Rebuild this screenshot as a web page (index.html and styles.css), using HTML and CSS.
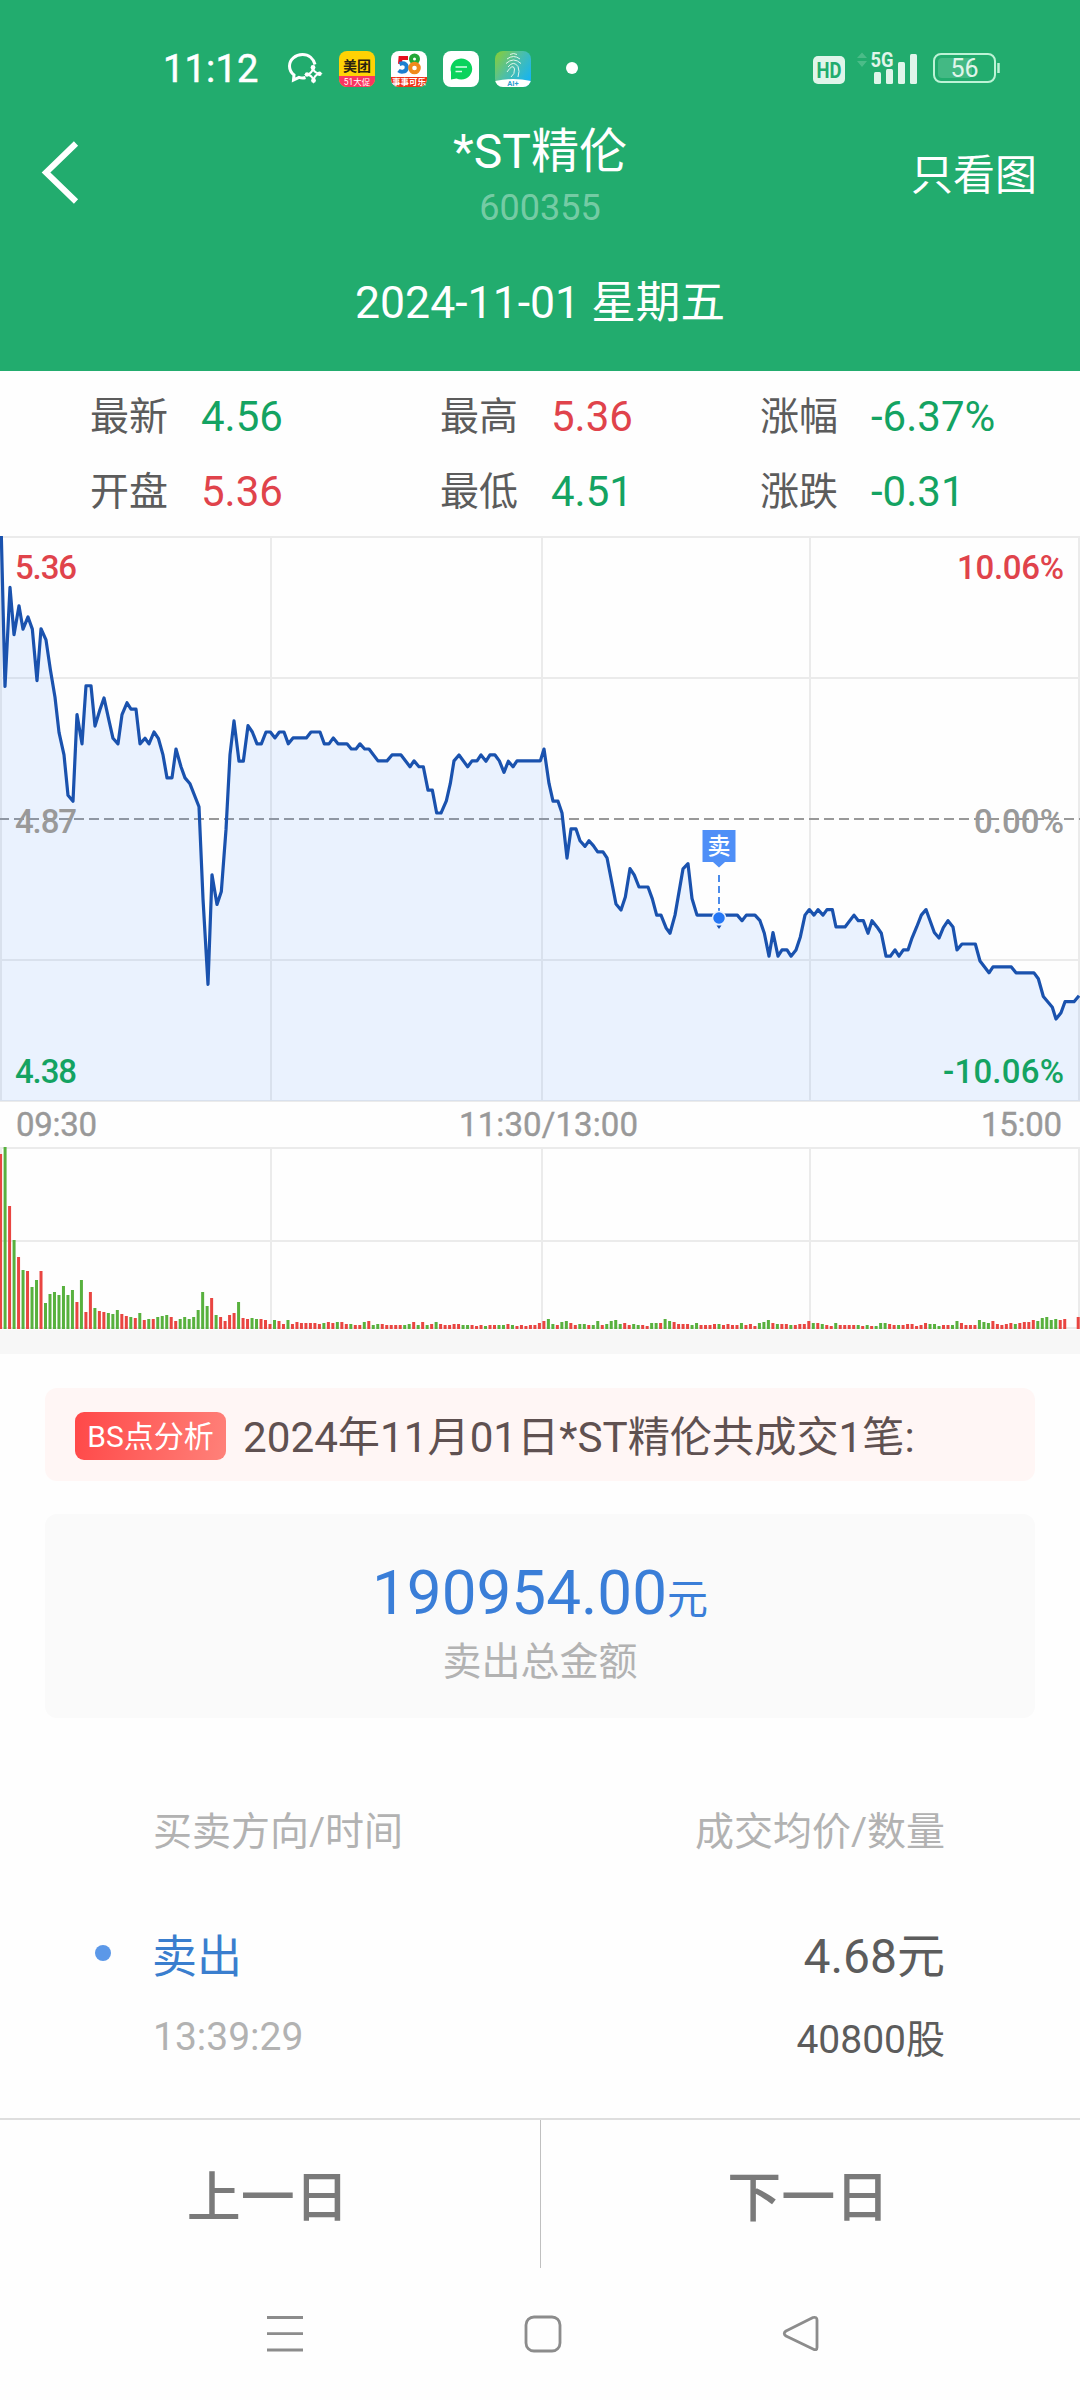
FILE: index.html
```html
<!DOCTYPE html>
<html lang="zh-CN">
<head>
<meta charset="utf-8">
<title>*ST精伦 600355</title>
<link rel="stylesheet" href="styles.css">
</head>
<body>
<div class="phone">
  <header class="top">
    <div class="status">
      <span class="clock">11:12</span>
      <svg class="chat" width="36" height="32" viewBox="0 0 36 32" fill="none" stroke="#fff" stroke-width="3">
        <path d="M28 12.500C26.500 7 22 2.500 15.500 2.500C8.500 2.500 2.500 7.500 2.500 14C2.500 18 4.500 21 7 23L6.500 28L12 25.300C14 26 17 26 18.500 25.500"/>
        <path d="M26 16.500Q27 20.500 32 21.700Q27.500 23 26.500 28Q25 23.500 20.500 22.500Q25 21 26 16.500Z" stroke-width="2"/>
        <g fill="#fff" stroke="none"><circle cx="26" cy="15.500" r="2.400"/><circle cx="32.500" cy="21.700" r="2.200"/><circle cx="26.500" cy="28.500" r="2.400"/><circle cx="20" cy="22.500" r="2.200"/></g>
      </svg>
      <div class="apps">
        <svg width="36" height="36" viewBox="0 0 36 36">
          <defs><clipPath id="rc"><rect width="36" height="36" rx="8"/></clipPath></defs>
          <g clip-path="url(#rc)"><rect width="36" height="36" fill="#ffd205"/><rect y="25" width="36" height="11" fill="#fb3460"/></g>
          <text x="18" y="19.500" font-size="14" font-weight="700" text-anchor="middle" fill="#2b2410">美团</text>
          <text x="18" y="34" font-size="8.500" text-anchor="middle" fill="#fff">51大促</text>
        </svg>
        <svg width="36" height="36" viewBox="0 0 36 36">
          <g clip-path="url(#rc)"><rect width="36" height="36" fill="#fff"/><rect y="26" width="36" height="10" fill="#ee3418"/></g>
          <g fill="none" stroke-width="4">
            <path d="M17 7H9.500L9 13" stroke="#e60f1e"/><path d="M8.500 13C14 11 16.500 14 15.500 18C14.500 21 10 21.500 7.500 19.500" stroke="#1d7fd0"/>
            <circle cx="23.500" cy="8" r="3.500" stroke="#22a838"/><circle cx="23.500" cy="17" r="4.300" stroke="#f08a1c"/>
          </g>
          <text x="18" y="33.500" font-size="8.500" font-weight="700" text-anchor="middle" fill="#fff">事事可乐</text>
        </svg>
        <svg width="36" height="36" viewBox="0 0 36 36">
          <rect width="36" height="36" rx="8" fill="#fff"/>
          <path d="M18 7.500a11 10.500 0 1 1-4.500 20L8 28.500V21A11 10.500 0 0 1 18 7.500Z" fill="#0ad35c"/>
          <path d="M12.500 16H24M12.500 20.500H19" stroke="#d8ffe6" stroke-width="1.700"/>
        </svg>
        <svg width="36" height="36" viewBox="0 0 36 36">
          <defs><linearGradient id="ag" x1="0" y1="0" x2="1" y2=".7"><stop offset="0" stop-color="#8bce32"/><stop offset=".5" stop-color="#4fbfa5"/><stop offset="1" stop-color="#19b4ee"/></linearGradient></defs>
          <g clip-path="url(#rc)"><rect width="36" height="36" fill="url(#ag)"/><path d="M0 30Q18 26 36 30V36H0Z" fill="#fff"/></g>
          <path d="M15 3.500Q18.500 1.500 22 3.500M12 8Q18.500 3 25 8M11 12.500Q18.500 5.500 26 12.500M13 16Q18.500 9 23 15.500Q25 20 23 26M12 21Q18 12 19.500 18Q20 23 16 26" fill="none" stroke="#dff6ea" stroke-width="1"/>
          <text x="18" y="35" font-size="7.500" font-weight="700" text-anchor="middle" fill="#2d9fd0">AI+</text>
        </svg>
      </div>
      <i class="more"></i>
      <svg class="radio" width="190" height="36" viewBox="812 50 190 36" fill="#e0f5ea">
        <rect x="813" y="56" width="32" height="28" rx="5"/>
        <text x="829" y="78" font-size="22" font-weight="700" text-anchor="middle" textLength="25" lengthAdjust="spacingAndGlyphs" fill="#22ac6e">HD</text>
        <path d="M857 58L862 52.500L867 58ZM857 61L862 67L867 61Z" opacity=".22"/>
        <text x="870.500" y="67" font-size="21" font-weight="700" textLength="23" lengthAdjust="spacingAndGlyphs">5G</text>
        <rect x="874" y="72" width="7" height="12" rx="1.500"/><rect x="886" y="69" width="7" height="15" rx="1.500"/><rect x="898" y="62" width="7" height="22" rx="1.500"/><rect x="910" y="54" width="7" height="30" rx="1.500"/>
        <rect x="938" y="58" width="34" height="20" rx="4" opacity=".18"/>
        <rect x="934" y="54" width="61" height="28" rx="7" fill="none" stroke="#bdf3d6" stroke-width="2"/>
        <path d="M998.500 63V73" stroke="#bdf3d6" stroke-width="2.500"/>
        <text x="964.500" y="77" font-size="25" text-anchor="middle">56</text>
      </svg>
    </div>
    <div class="title">
      <svg class="back" width="40" height="64" viewBox="0 0 40 64" fill="none" stroke="#fff" stroke-width="6"><path d="M35 2.500L5 31.500L35 60.500"/></svg>
      <div class="names"><h1>*ST精伦</h1><span>600355</span></div>
      <span class="only">只看图</span>
    </div>
    <div class="date">2024-11-01 星期五</div>
  </header>

  <section class="quotes">
    <span>最新</span><b class="dn">4.56</b><span>最高</span><b class="up">5.36</b><span>涨幅</span><b class="dn">-6.37%</b>
    <span>开盘</span><b class="up">5.36</b><span>最低</span><b class="dn">4.51</b><span>涨跌</span><b class="dn">-0.31</b>
  </section>

  <svg class="chart" width="1080" height="794" viewBox="0 536 1080 794">
    <g class="grid">
      <path d="M0 537H1080M0 678H1080M0 960H1080M0 1101H1080M1 536V1101M271 536V1101M542 536V1101M810 536V1101M1079 536V1101"/>
      <path d="M0 1148H1080M0 1241H1080M0 1328H1080M1 1148V1329M271 1148V1329M542 1148V1329M810 1148V1329M1079 1148V1329"/>
    </g>
    <path class="base" d="M-1 819H1080"/>
    <path class="area" id="area"/>
    <g transform="translate(0 530) scale(.333333 .369959)">
      <polyline class="line" id="line" points="4,16 15,423 30,155 42,283 57,205 69,268 84,235 97,268 111,407 123,267 138,297 151,377 165,452 177,547 192,608 204,717 219,733 231,499 246,578 258,421 273,421 285,530 300,485 312,454 327,515 339,563 354,578 366,499 381,467 393,484 408,484 420,578 435,563 447,578 462,546 475,563 489,608 501,670 516,670 528,592 543,640 555,670 570,686 597,748 609,997 624,1228 636,932 651,1012 664,977 678,810 690,607 702,516 717,625 730,625 744,529 757,546 771,578 784,578 798,546 811,546 825,562 838,546 852,546 865,578 879,562 919,562 933,546 960,546 973,578 987,578 1000,562 1014,578 1041,578 1054,592 1068,592 1080,578 1094,592 1107,592 1134,624 1161,624 1176,608 1203,608 1230,640 1242,624 1257,640 1270,640 1284,703 1297,703 1310,765 1323,765 1339,732 1351,685 1362,624 1377,608 1403,640 1416,624 1431,624 1443,608 1458,625 1470,608 1485,608 1498,624 1512,655 1525,625 1539,640 1551,624 1621,624 1632,592 1647,685 1659,733 1674,733 1686,765 1701,887 1713,808 1728,808 1740,840 1755,855 1767,840 1780,853 1793,870 1809,870 1821,886 1848,1011 1863,1027 1876,992 1890,915 1903,933 1917,965 1944,965 1957,997 1970,1041 1983,1041 1998,1075 2010,1090 2025,1041 2049,916 2064,902 2076,996 2091,1041 2212,1041 2226,1056 2239,1041 2265,1041 2280,1056 2293,1090 2307,1152 2319,1088 2334,1152 2346,1135 2361,1135 2373,1152 2388,1135 2401,1100 2415,1041 2428,1026 2442,1041 2454,1026 2469,1041 2481,1026 2497,1026 2508,1073 2535,1073 2562,1041 2575,1056 2590,1056 2604,1090 2616,1056 2631,1073 2644,1090 2658,1152 2671,1152 2685,1135 2697,1152 2710,1135 2724,1135 2736,1103 2750,1073 2764,1041 2778,1026 2803,1088 2817,1103 2830,1075 2844,1056 2859,1073 2871,1135 2886,1119 2926,1119 2940,1165 2967,1197 2979,1181 3034,1181 3048,1197 3102,1197 3115,1213 3130,1261 3157,1290 3168,1322 3183,1305 3195,1275 3222,1275 3237,1259"/>
    </g>
    <g class="axis">
      <text x="15" y="579" class="up" textLength="62">5.36</text>
      <text x="15" y="833" textLength="62">4.87</text>
      <text x="15" y="1083" class="dn" textLength="62">4.38</text>
      <text x="957" y="579" class="up" textLength="107">10.06%</text>
      <text x="974" y="833" textLength="90">0.00%</text>
      <text x="943" y="1083" class="dn" textLength="121">-10.06%</text>
      <g class="times">
        <text x="16" y="1136" textLength="81">09:30</text>
        <text x="459" y="1136" textLength="179">11:30/13:00</text>
        <text x="981" y="1136" textLength="81">15:00</text>
      </g>
    </g>
    <g class="mark">
      <path d="M702.500 830H735.500V862H725L719 867.500L713 862H702.500Z" fill="#4f8ff7"/>
      <text x="719" y="854" text-anchor="middle">卖</text>
      <path d="M719 875V912" stroke="#4a8bea" stroke-width="2" stroke-dasharray="7 4"/>
      <circle cx="719" cy="918" r="6.500" fill="#2577f5" stroke="#eaf2fe" stroke-width="1.500"/>
      <path d="M716.500 925.500H721.500L719 929Z" fill="#1a52ae"/>
    </g>
    <g id="vol"></g>
  </svg>
  <div class="band"></div>

  <section class="notice"><em>BS点分析</em><p>2024年11月01日*ST精伦共成交1笔:</p></section>
  <section class="total"><div class="sum">190954.00<small>元</small></div><div class="cap">卖出总金额</div></section>
  <section class="deals">
    <div class="row head"><span>买卖方向/时间</span><span>成交均价/数量</span></div>
    <div class="row deal"><span class="sell">卖出</span><span class="price">4.68元</span></div>
    <div class="row when"><span>13:39:29</span><span class="qty">40800股</span></div>
  </section>
  <footer class="days"><span>上一日</span><span>下一日</span></footer>
  <svg class="nav" width="1080" height="132" viewBox="0 2268 1080 132" fill="none" stroke="#8c8c8c" stroke-width="2.800" stroke-linejoin="round">
    <path d="M267 2317.500H303M267 2333.700H303M267 2350H303"/>
    <rect x="526" y="2317" width="34" height="34" rx="8"/>
    <path d="M786 2331L813 2317.500Q817 2316.500 817 2320V2347.500Q817 2351 813 2349L786 2336Q782.500 2333.500 786 2331Z"/>
  </svg>
</div>
<script src="chart.js"></script>
</body>
</html>
```
FILE: styles.css
```css
* { box-sizing: border-box; margin: 0; padding: 0; }
body { width: 1080px; background: #fefefe; font-family: Roboto, "Noto Sans CJK SC", sans-serif; color: #5c5c5c; }
svg { display: block; }
svg text { font-family: Roboto, "Noto Sans CJK SC", sans-serif; }
b, h1, em, i { font-weight: 400; font-style: normal; }
.phone { width: 1080px; height: 2400px; overflow: hidden; display: flex; flex-direction: column; }
.top { height: 371px; background: #22ac6e; color: #fff; flex: none; }
.status { height: 112px; padding: 50px 78px 0 163px; display: flex; align-items: flex-start; }
.clock { width: 124px; font-size: 38px; line-height: 38px; font-weight: 400; letter-spacing: 0.2px; white-space: nowrap; -webkit-text-stroke: 0.5px #fff; }
.chat { margin-top: 2px; margin-right: 16px; }
.apps { display: flex; gap: 16px; margin-top: 1px; }
.more { width: 12px; height: 12px; border-radius: 50%; background: #fff; margin: 12px 0 0 35px; }
.radio { margin-left: auto; }
.title { height: 123px; display: flex; align-items: center; justify-content: space-between; padding: 0 43px 0 41px; }
.back { margin-right: 88px; margin-bottom: 1px; }
.names { display: flex; flex-direction: column; align-items: center; gap: 2px; padding-top: 3px; }
.names h1 { font-size: 48px; line-height: 64px; }
.names span { font-size: 36px; line-height: 44px; color: rgba(255,255,255,.4); }
.only { font-size: 42px; margin-bottom: 4px; }
.date { margin-top: 36px; text-align: center; font-size: 44.6px; line-height: 64px; }
.quotes { height: 165px; flex: none; padding: 8px 0 0 90px; display: grid; grid-template-columns: 111px 239px 111px 209px 111px 200px; grid-template-rows: 75px 75px; align-items: center; }
.quotes span { font-size: 39px; padding-bottom: 8px; }
.quotes b { font-size: 42px; }
.up { color: #e0434b; fill: #e0434b; }
.dn { color: #14a362; fill: #14a362; }
.chart { flex: none; background: #fefefe; }
.grid { stroke: #ebebeb; stroke-width: 2; fill: none; }
.base { stroke: #999; stroke-width: 1.8; stroke-dasharray: 10 5; }
.area { fill: rgba(54,134,255,.1); }
.line { fill: none; stroke: #1a52ae; stroke-width: 3.2; stroke-linejoin: round; vector-effect: non-scaling-stroke; }
.axis text { font-size: 33px; font-weight: 500; }
.axis text:not(.up):not(.dn) { fill: #999; }
.axis .times text { font-weight: 400; stroke: #999; stroke-width: .4; }
.mark text { font-size: 23px; font-weight: 500; fill: #fff; }
.band { height: 24px; flex: none; background: #f7f7f7; }
.notice { margin: 34px 45px 0; height: 93px; flex: none; border-radius: 12px; background: #fff6f5; display: flex; align-items: center; padding: 0 30px; }
.notice em { width: 151px; height: 48px; line-height: 50px; margin-top: 2px; border-radius: 9px; text-align: center; font-size: 30px; color: #fff; background: linear-gradient(100deg, #ff4848, #ff8179); }
.notice p { margin-left: 17px; font-size: 42.2px; color: #5f5151; white-space: nowrap; padding-bottom: 2px; }
.total { margin: 33px 45px 0; height: 204px; flex: none; border-radius: 12px; background: #fafafa; text-align: center; padding-top: 35px; }
.sum { font-size: 62px; line-height: 88px; color: #3a7ed8; }
.sum small { font-size: 41px; }
.cap { font-size: 39px; line-height: 52px; margin-top: -8px; color: #b2b2b2; }
.deals { flex: none; height: 400px; padding: 80px 135px 0 153px; }
.row { display: flex; justify-content: space-between; align-items: center; white-space: nowrap; }
.head { height: 60px; font-size: 39px; color: #b2b2b2; }
.deal { height: 60px; margin-top: 65px; font-size: 48px; }
.when { height: 60px; margin-top: 23px; font-size: 39px; color: #b2b2b2; }
.when span:first-child { padding-top: 2px; }
.sell { font-size: 45px; color: #3a7ece; display: flex; align-items: center; }
.sell::before { content: ""; width: 16px; height: 16px; border-radius: 50%; background: #5b98e8; margin: 0 41px 0 -58px; }
.price { color: #5c5c5c; margin-top: -2px; }
.qty { color: #5c5c5c; margin-top: -1px; }
.days { flex: none; height: 150px; border-top: 2px solid #dedede; display: flex; }
.days span { flex: 1; text-align: center; line-height: 158px; height: 148px; font-size: 54px; font-weight: 500; color: #7a7a7a; padding-right: 4px; }
.days span + span { border-left: 1px solid #c0c0c0; }
.nav { flex: none; }
```
FILE: chart.js
```javascript
// Close the price line down to the bottom of the plot to form the shaded area.
const pts = document.getElementById('line').getAttribute('points').split(' ').map(p => {
  const [x, y] = p.split(',').map(Number);
  return (x / 3).toFixed(1) + ' ' + (530 + y * 0.369959).toFixed(1);
});
document.getElementById('area').setAttribute('d', 'M0 536L' + pts.join('L') + 'L1080 995V1101H0Z');

// One volume bar per minute: colour letter and height.
const volume = `r175 g182 r123 g89 r72 g59 r58 g42 g49 r58 g26 g35 g37 g34 g43 g34 g39 r27 g49 r17
r37 g21 r18 r17 g16 g15 g19 r15 r13 g12 r11 g16 r9 g10 r10 g12 g13 g14 r12 r8
g10 g12 g10 g12 g19 g37 g23 r31 g14 r12 r8 r14 r16 g27 r11 r10 g11 g10 r10 r9
r5 g9 r8 r5 g9 r5 r7 r6 r6 r6 r6 r5 g6 r7 r6 g7 r7 r5 g5 r4
r4 g7 r8 g4 g5 r5 r4 r4 r4 r4 g4 g5 r7 g4 r7 g4 r5 g7 r5 r4
r4 r5 r5 g4 g4 r4 r3 r4 g3 r4 r4 g4 g4 r5 g4 r3 r4 r3 r4 r4
r6 r8 g10 g5 r4 g7 g8 r6 r4 g5 g5 r4 g4 g8 r4 g5 g8 g9 g5 r6
r4 g5 g4 r4 r3 g6 g6 r6 g10 g8 r7 r5 r5 r5 g4 g6 r4 r4 r4 r5
g5 r4 r5 r4 r4 g6 r4 r5 r3 g6 g7 g9 r6 g5 r5 r5 g4 r4 r5 r5
r8 g6 r6 g5 r4 r3 g6 r4 r4 r4 r4 g4 r3 g4 r3 g3 g6 g6 r5 r4
g4 r4 r5 r5 r3 r4 r6 g5 g5 g3 r4 r4 g4 g8 r6 r4 r4 r4 g9 g7
g6 r8 r5 r4 r5 r6 g5 r6 r7 r7 r9 g8 g11 g12 g9 g10 r9 r10 r0 r0 r12`.split(/\s+/);
const colours = { r: '#e94541', g: '#58b13e' };
document.getElementById('vol').innerHTML = volume.map((v, i) => {
  const h = +v.slice(1);
  return `<rect x="${(i * 4.49 - 0.9).toFixed(2)}" y="${1329 - h}" width="3" height="${h}" fill="${colours[v[0]]}"/>`;
}).join('');
```
